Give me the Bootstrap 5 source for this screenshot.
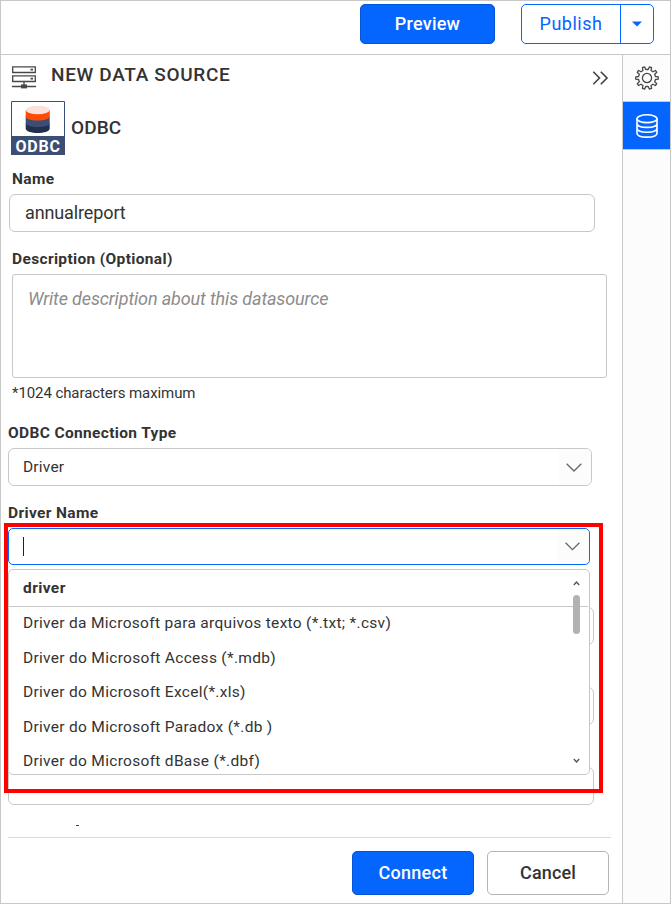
<!DOCTYPE html>
<html lang="en">
<head>
<meta charset="utf-8">
<meta name="viewport" content="width=device-width, initial-scale=1">
<title>New Data Source</title>
<link href="https://cdn.jsdelivr.net/npm/bootstrap@5.3.0/dist/css/bootstrap.min.css" rel="stylesheet">
<style>
:root { --accent: #0565ff; --line: #c8c8c8; --ink: #333; }
body { font-family: Roboto, "Liberation Sans", sans-serif; color: var(--ink); background: #fff; }
svg { display: block; flex: none; }
.frame { width: 671px; height: 904px; border: 1px solid var(--line); }
.topbar { height: 54px; border-bottom: 1px solid var(--line); padding: 3px 16px 0 0; gap: 26px; }
.btn { --bs-btn-border-radius: 5px; --bs-btn-padding-x: 0; --bs-btn-padding-y: 0; --bs-btn-font-size: 18px; line-height: 1; }
.btn-main { --bs-btn-bg: var(--accent); --bs-btn-border-color: #0455d6; --bs-btn-color: #fff; --bs-btn-font-weight: 500; letter-spacing: .25px; }
.btn-line { --bs-btn-border-color: var(--accent); --bs-btn-color: var(--accent); letter-spacing: .5px; }
.btn-plain { --bs-btn-border-color: #b4b4b4; --bs-btn-color: var(--ink); --bs-btn-font-weight: 500; letter-spacing: .15px; --bs-btn-bg: #fff; }
.btn-preview { width: 135px; height: 40px; }
.btn-publish { width: 100px; height: 40px; }
.btn-caret { width: 34px; height: 40px; }
.btn-foot { width: 122px; height: 44px; }
.panel-head { height: 41px; padding: 0 13px 0 11px; }
.panel-title { font-size: 19px; font-weight: 500; letter-spacing: .66px; line-height: 24px; margin: -1px 0 0 14px; }
.source { height: 54px; margin: 5px 0 0 10px; }
.source-name { font-size: 19px; font-weight: 500; line-height: 24px; margin-left: 6px; letter-spacing: .1px; }
.logo-text { font: 700 16px Roboto, sans-serif; letter-spacing: .8px; }
.form-area { height: 748px; padding-left: 7px; }
.scroll-view { height: 671px; }
.field-label { display: block; font-size: 15.5px; font-weight: 700; letter-spacing: .35px; line-height: 19px; padding: 18px 0 5px; }
.label-inset { padding-left: 4px; }
.label-first { padding-top: 15px; }
.box { height: 38px; border: 1px solid var(--line); border-radius: 6px; background: #fff; }
.box-name { width: 586px; margin-left: 1px; padding-left: 15px; font-size: 18px; letter-spacing: -.12px; line-height: 36px; }
.box-desc { width: 595px; height: 104px; margin-left: 4px; border-radius: 3px; padding: 12px 15px; font-size: 18px; font-style: italic; letter-spacing: -.13px; line-height: 24px; color: #8c8c8c; }
.hint { font-size: 15px; letter-spacing: -.08px; line-height: 19px; padding: 6px 0 3px 4px; }
.box-type { width: 584px; }
.box-driver { width: 582px; height: 37px; border-color: var(--accent); border-radius: 5px; }
.box-wide { width: 586px; }
.pick-text { font-size: 15.5px; letter-spacing: .2px; padding-left: 14px; line-height: 36px; }
.pick-arrow { width: 32px; padding-right: 2px; background: #fcfcfc; border-radius: 0 5px 5px 0; }
.text-cursor { width: 1px; height: 19px; background: #222; margin-left: 14px; }
.options { left: 0; top: 41px; width: 582px; height: 206px; border: 1px solid var(--line); border-radius: 5px; background: #fff; z-index: 2; font-size: 15.5px; letter-spacing: .3px; }
.option-head { height: 37px; line-height: 37px; border-bottom: 1px solid var(--line); margin-right: 1px; padding-left: 14px; font-weight: 700; letter-spacing: .4px; }
.option { height: 34.6px; line-height: 32px; padding-left: 14px; }
.scroller { right: 7px; top: 0; width: 11px; height: 204px; }
.scroll-thumb { width: 7px; height: 39px; border-radius: 4px; background: #b2b2b2; margin-top: 9px; }
.highlight { left: -4px; top: -5px; width: 599px; height: 270px; border: 4px solid #f00; z-index: 3; }
.letter-tip { width: 3px; height: 1px; background: #444; margin: 20px 0 0 68px; }
.foot { width: 603px; margin-top: 11px; border-top: 1px solid #dadada; padding: 13px 2px 0 0; gap: 13px; }
.rail { width: 48px; border-left: 1px solid var(--line); background: #fcfcfc; }
.rail-item { height: 47px; border-bottom: 1px solid var(--line); }
.rail-item.chosen { height: 48px; background: var(--accent); }
</style>
</head>
<body>
<div class="frame d-flex flex-column overflow-hidden">
  <header class="topbar d-flex justify-content-end align-items-start">
    <button class="btn btn-main btn-preview">Preview</button>
    <div class="btn-group">
      <button class="btn btn-line btn-publish">Publish</button>
      <button class="btn btn-line btn-caret d-flex align-items-center justify-content-center" aria-label="More"><svg width="10" height="6"><path d="M0 .5H10L5 5.5Z" fill="#0565ff"/></svg></button>
    </div>
  </header>
  <div class="d-flex flex-grow-1">
    <main class="flex-grow-1">
      <div class="panel-head d-flex align-items-center">
        <svg class="mt-1" width="25" height="24" viewBox="0 0 25 24" fill="none" stroke="#484848" stroke-width="1.3"><path d="M.7 .8H23.3V6.5H.7ZM.7 9.8H23.3V15.5H.7Z"/><path d="M0 20.5H24M12 15.5V20" /><path d="M9 18.4h6v4H9z" fill="#484848" stroke="none"/><path d="M18.5 3.7h2.5M18.5 12.7h2.5" stroke-width="1.7"/></svg>
        <div class="panel-title">NEW DATA SOURCE</div>
        <svg class="ms-auto mt-1" width="17" height="14" viewBox="0 0 17 14" fill="none" stroke="#404040" stroke-width="1.6"><path d="M1.3 .7 7.5 7 1.3 13.3M8.8 .7 15 7 8.8 13.3"/></svg>
      </div>
      <div class="source d-flex align-items-center">
        <svg width="54" height="54" viewBox="0 0 54 54"><path d="M.5 .5H53.5V53.5H.5Z" fill="#fff" stroke="#3c4e73"/><path d="M0 35H54V54H0Z" fill="#3c4e73"/><path d="M14.7 22V27.5C14.7 33.5 38.7 33.5 38.7 27.5V22Z" fill="#22304e"/><path d="M14.7 15V22C14.7 27.3 38.7 27.3 38.7 22V15Z" fill="#3c4e73"/><path d="M14.7 9V15.5C14.7 20.8 38.7 20.8 38.7 15.5V9Z" fill="#ff4a05"/><ellipse cx="26.7" cy="9" rx="12" ry="4.2" fill="#fde1d8"/><text class="logo-text" x="4.4" y="50.7" fill="#fff">ODBC</text></svg>
        <div class="source-name">ODBC</div>
      </div>
      <div class="form-area">
        <div class="scroll-view">
          <label class="field-label label-inset label-first">Name</label>
          <div class="box box-name">annualreport</div>
          <label class="field-label label-inset">Description (Optional)</label>
          <div class="box box-desc">Write description about this datasource</div>
          <div class="hint">*1024 characters maximum</div>
          <label class="field-label">ODBC Connection Type</label>
          <div class="box box-type d-flex">
            <div class="pick-text flex-grow-1">Driver</div>
            <div class="pick-arrow d-flex align-items-center justify-content-center"><svg width="16" height="9" viewBox="0 0 16 9" fill="none" stroke="#666" stroke-width="1.3"><path d="M.7 .8 8 8 15.3 .8"/></svg></div>
          </div>
          <label class="field-label">Driver Name</label>
          <div class="position-relative">
            <div class="box box-driver d-flex align-items-center justify-content-between">
              <span class="text-cursor"></span>
              <div class="pick-arrow h-100 d-flex align-items-center justify-content-center"><svg width="15" height="9" viewBox="0 0 15 9" fill="none" stroke="#666" stroke-width="1.3"><path d="M.6 .8 7.5 7.6 14.4 .8"/></svg></div>
            </div>
            <div class="options position-absolute">
              <div class="option-head">driver</div>
              <div class="option">Driver da Microsoft para arquivos texto (*.txt; *.csv)</div>
              <div class="option">Driver do Microsoft Access (*.mdb)</div>
              <div class="option">Driver do Microsoft Excel(*.xls)</div>
              <div class="option">Driver do Microsoft Paradox (*.db )</div>
              <div class="option">Driver do Microsoft dBase (*.dbf)</div>
              <div class="scroller position-absolute d-flex flex-column align-items-center">
                <svg class="mt-2" width="7" height="8" viewBox="0 0 7 8" fill="none" stroke="#555" stroke-width="1.4"><path d="M.8 7 3.5 4 6.2 7"/></svg>
                <div class="scroll-thumb"></div>
                <svg class="mt-auto mb-2" width="7" height="8" viewBox="0 0 7 8" fill="none" stroke="#555" stroke-width="1.4"><path d="M.8 1 3.5 4 6.2 1"/></svg>
              </div>
            </div>
            <div class="highlight position-absolute"></div>
          </div>
          <label class="field-label">&nbsp;</label><div class="box box-wide"></div>
          <label class="field-label">&nbsp;</label><div class="box box-wide"></div>
          <label class="field-label">&nbsp;</label><div class="box box-wide"></div>
          <div class="letter-tip"></div>
        </div>
        <div class="foot d-flex justify-content-end">
          <button class="btn btn-main btn-foot">Connect</button>
          <button class="btn btn-plain btn-foot">Cancel</button>
        </div>
      </div>
    </main>
    <aside class="rail">
      <div class="rail-item d-flex align-items-center justify-content-center"><svg width="24" height="24" viewBox="-12 -12 24 24" fill="none" stroke="#484848" stroke-width="1.3" stroke-linejoin="round"><path d="M1.2-8.5 2.35-11.05 4.6-10.3 4.05-7.6 5.95-6.2 8.4-7.55 9.8-5.65 7.7-3.8 8.45-1.5 11.25-1.2V1.2L8.45 1.5 7.7 3.8 9.8 5.65 8.4 7.55 5.95 6.2 4.05 7.6 4.6 10.3 2.35 11.05 1.2 8.5H-1.2L-2.35 11.05-4.6 10.3-4.05 7.6-5.95 6.2-8.4 7.55-9.8 5.65-7.7 3.8-8.45 1.5-11.25 1.2V-1.2L-8.45-1.5-7.7-3.8-9.8-5.65-8.4-7.55-5.95-6.2-4.05-7.6-4.6-10.3-2.35-11.05-1.2-8.5Z"/><circle r="4.6"/></svg></div>
      <div class="rail-item chosen d-flex align-items-center justify-content-center"><svg width="22" height="24" viewBox="0 0 22 24" fill="none" stroke="#fff" stroke-width="1.6"><ellipse cx="11" cy="4.7" rx="10" ry="3.9"/><path d="M1 4.7V19.2C1 24.4 21 24.4 21 19.2V4.7M1 9.5C1 14.7 21 14.7 21 9.5M1 14.3C1 19.5 21 19.5 21 14.3"/></svg></div>
    </aside>
  </div>
</div>
<script src="https://cdn.jsdelivr.net/npm/bootstrap@5.3.0/dist/js/bootstrap.bundle.min.js"></script>
</body>
</html>
